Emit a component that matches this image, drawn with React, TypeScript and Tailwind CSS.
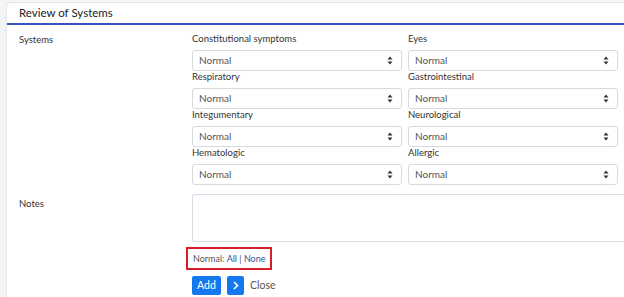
import React from 'react';

const rows: [string, string][] = [
  ['Constitutional symptoms', 'Eyes'],
  ['Respiratory', 'Gastrointestinal'],
  ['Integumentary', 'Neurological'],
  ['Hematologic', 'Allergic'],
];

function SelectBox() {
  return (
    <div className="flex h-[21px] w-[210px] items-center justify-between rounded-[3px] border border-[#d6d9de] bg-white pl-[6px] pr-[8px] text-[10px] text-[#555]">
      <span>Normal</span>
      <svg width="6" height="9" viewBox="0 0 6 9">
        <path d="M3 0.5L5.5 3.5H0.5Z" fill="#333" />
        <path d="M3 8.5L5.5 5.5H0.5Z" fill="#333" />
      </svg>
    </div>
  );
}

export default function App() {
  return (
    <div className="h-[297px] w-[624px] overflow-hidden bg-[#f3f4f6] pl-[6px] pt-[2px]" style={{ fontFamily: 'Lato, "Open Sans", sans-serif' }}>
      <div className="h-[320px] rounded-tl-[3px] border-l border-t border-[#e3e5e8] bg-white">
        <div className="flex h-[22px] items-center border-b-2 border-[#3b50c2] pl-[12px] text-[11.5px] text-[#222]">
          Review of Systems
        </div>
        <div className="flex pt-[8px]">
          <div className="w-[185px] pl-[12px] text-[9.5px] text-[#333]">Systems</div>
          <div className="flex flex-col">
            {rows.map(([a, b]) => (
              <div key={a} className="flex gap-[6px]">
                {[a, b].map((l) => (
                  <div key={l} className="flex w-[210px] flex-col">
                    <div className="h-[17px] text-[9.5px] leading-[12px] text-[#333]">{l}</div>
                    <SelectBox />
                  </div>
                ))}
              </div>
            ))}
          </div>
        </div>
        <div className="mt-[9px] flex">
          <div className="w-[185px] pl-[12px] pt-[3px] text-[9.5px] text-[#333]">Notes</div>
          <div className="h-[48px] flex-1 rounded-l-[3px] border-y border-l border-[#d6dde6]"></div>
        </div>
        <div className="ml-[179px] mt-[5px] flex h-[23px] w-fit items-center whitespace-nowrap border-2 border-[#d91c2a] px-[5px] text-[9px] text-[#555]">
          <span>Normal:&nbsp;</span>
          <span className="text-[#3c4f8f]">All</span>
          <span>&nbsp;|&nbsp;</span>
          <span className="text-[#3c4f8f]">None</span>
        </div>
        <div className="ml-[185px] mt-[6px] flex items-center gap-[6px]">
          <div className="flex h-[19px] w-[29px] items-center justify-center rounded-[2px] bg-[#1479f0] text-[10.5px] text-white">Add</div>
          <div className="flex h-[19px] w-[17px] items-center justify-center rounded-[2px] bg-[#1479f0]">
            <svg width="6" height="9" viewBox="0 0 6 9">
              <path d="M1 1L4.5 4.5L1 8" stroke="white" strokeWidth="1.6" fill="none" />
            </svg>
          </div>
          <span className="text-[10.5px] text-[#555]">Close</span>
        </div>
      </div>
    </div>
  );
}
